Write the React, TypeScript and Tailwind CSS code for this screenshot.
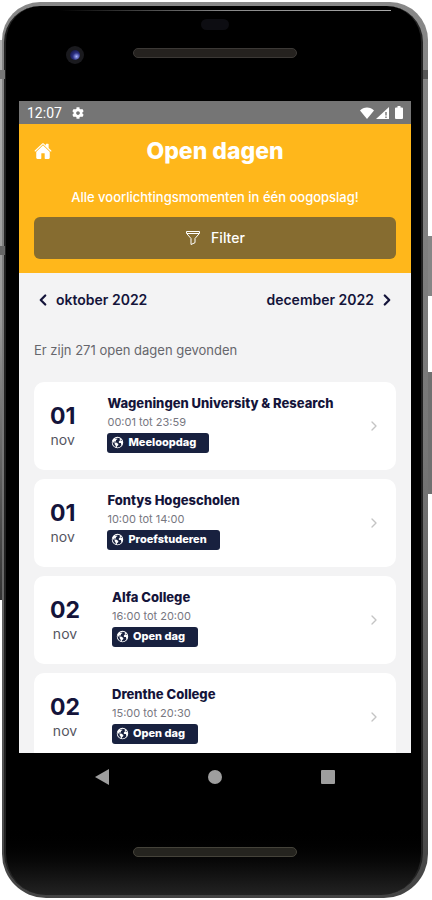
import { FaCog } from "react-icons/fa";
import { IoEarth, IoHome } from "react-icons/io5";
import { ChevronLeft, ChevronRight } from "lucide-react";

interface OpenDay {
  id: number;
  day: string;
  month: string;
  school: string;
  time: string;
  type: string;
}

const openDays: OpenDay[] = [
  {
    id: 1,
    day: "01",
    month: "nov",
    school: "Wageningen University & Research",
    time: "00:01 tot 23:59",
    type: "Meeloopdag",
  },
  {
    id: 2,
    day: "01",
    month: "nov",
    school: "Fontys Hogescholen",
    time: "10:00 tot 14:00",
    type: "Proefstuderen",
  },
  {
    id: 3,
    day: "02",
    month: "nov",
    school: "Alfa College",
    time: "16:00 tot 20:00",
    type: "Open dag",
  },
  {
    id: 4,
    day: "02",
    month: "nov",
    school: "Drenthe College",
    time: "15:00 tot 20:30",
    type: "Open dag",
  },
];

function StatusBar() {
  return (
    <div className="flex h-[23px] shrink-0 items-center justify-between bg-[#757575] px-2 text-white">
      <div className="flex items-center gap-[10px]">
        <span className="font-[Roboto,sans-serif] text-sm">12:07</span>
        <FaCog className="h-3 w-3" />
      </div>
      <div className="flex items-center gap-[2px]">
        <svg viewBox="0 0 14 12" className="h-3 w-[14px]" fill="currentColor">
          <path d="M7 12 0 3.4C1.8 1.4 4.2.4 7 .4s5.2 1 7 3L7 12Z" />
        </svg>
        <svg viewBox="0 0 13 12" className="h-3 w-[13px]" fill="currentColor">
          <path d="M13 0v12H0L13 0Z" />
          <path d="M10 5v3.500M10 9.500V11" stroke="#757575" strokeWidth="1.400" />
        </svg>
        <svg viewBox="0 0 8 13" className="ml-1 h-[13px] w-2" fill="currentColor">
          <path d="M2.500 0h3v1.500H7a1 1 0 0 1 1 1V12a1 1 0 0 1-1 1H1a1 1 0 0 1-1-1V2.500a1 1 0 0 1 1-1h1.500V0Z" />
        </svg>
      </div>
    </div>
  );
}

function Header() {
  return (
    <header className="shrink-0 bg-[#ffb71b] px-[15px] pt-[11px] pb-[14px] text-white">
      <div className="grid grid-cols-[20px_1fr_20px] items-center">
        <a href="#home" aria-label="Home">
          <IoHome className="h-[18px] w-[18px]" />
        </a>
        <h1 className="text-center text-[23px] leading-8 font-extrabold">Open dagen</h1>
      </div>
      <p className="mt-5 text-center text-[13px] leading-5 font-medium">
        Alle voorlichtingsmomenten in één oogopslag!
      </p>
      <button className="mt-[10px] flex h-[42px] w-full items-center justify-center gap-[10px] rounded-md bg-[#866c30] text-sm font-medium">
        <svg viewBox="0 0 16 16" className="h-4 w-4" fill="none" stroke="currentColor">
          <path d="M1.500 1.500h13v1.800L10 8.500v4.200l-4 1.800v-6L1.500 3.300V1.500Z" strokeLinejoin="round" />
          <path d="M2 3.500h12" />
        </svg>
        Filter
      </button>
    </header>
  );
}

function OpenDayCard({ item }: { item: OpenDay }) {
  return (
    <li>
      <a
        href={`#dag-${item.id}`}
        className="flex h-[88px] items-center rounded-[10px] bg-white pr-[14px] pl-4"
      >
        {/* Date */}
        <div className="pt-1 text-center">
          <p className="text-[23px] leading-6 font-bold">{item.day}</p>
          <p className="text-sm leading-6 text-[#55555f]">{item.month}</p>
        </div>

        {/* Info */}
        <div className="ml-8 min-w-0 flex-1 pb-[7px]">
          <h2 className="truncate text-[13px] leading-5 font-extrabold">{item.school}</h2>
          <p className="text-[11px] leading-[18px] text-[#77777f]">{item.time}</p>
          <span className="mt-[2px] flex h-5 w-fit items-center gap-1 rounded-[3px] bg-[#18213f] pr-[13px] pl-1 text-[11px] font-extrabold text-white">
            <IoEarth className="h-[13px] w-[13px]" />
            {item.type}
          </span>
        </div>

        <ChevronRight className="h-4 w-4 shrink-0 text-[#c4c4c4]" strokeWidth={2} />
      </a>
    </li>
  );
}

function NavigationBar() {
  return (
    <nav className="flex h-[47px] items-center justify-center gap-[99px] text-[#9e9e9e]">
      <button aria-label="Terug">
        <svg viewBox="0 0 14 16" className="h-4 w-[14px]" fill="currentColor">
          <path d="M14 0v16L0 8 14 0Z" />
        </svg>
      </button>
      <button aria-label="Start" className="h-[14px] w-[14px] rounded-full bg-current" />
      <button aria-label="Recent" className="h-[14px] w-[14px] rounded-[1px] bg-current" />
    </nav>
  );
}

export default function App() {
  return (
    <div className="relative h-screen bg-white pt-[2px] pr-1 pb-[2px] font-[Inter,sans-serif]">
      {/* Side strips and hardware buttons */}
      <div className="absolute top-10 left-0 h-[560px] w-6 bg-linear-to-b from-[#b4b4b4] via-[#999999] to-[#333333]" />
      <div className="absolute top-[236px] right-0 h-[60px] w-2 bg-[#858585]" />
      <div className="absolute top-[372px] right-0 h-[122px] w-2 bg-[#707070]" />

      {/* Frame */}
      <div className="relative ml-[2px] h-full rounded-t-[38px] rounded-b-[44px] bg-linear-to-b from-[#888888] via-[#777777] to-[#444444] pt-1 pr-[5px] pb-[3px] pl-[2px]">
        <div className="absolute top-[68px] right-0 h-[9px] w-[5px] bg-[#555555]" />
        <div className="absolute top-[68px] -left-[2px] h-[9px] w-[5px] bg-[#777777]" />
        <div className="absolute top-[244px] -left-[2px] h-[9px] w-[5px] bg-[#666666]" />
        <div className="flex h-full flex-col rounded-t-[36px] rounded-b-[42px] border-x-2 border-[#222222] bg-linear-to-b from-black from-92% to-[#232323] pr-[10px] pl-[13px]">
          {/* Top bezel */}
          <div className="relative h-[95px] shrink-0">
            <div className="absolute top-1 right-5 left-10 h-px bg-linear-to-r from-transparent via-[#888888] to-[#aaaaaa]" />
            <div className="absolute top-[13px] left-1/2 h-[11px] w-7 -translate-x-1/2 rounded-full bg-[#0d0d12]" />
            <div className="absolute top-[40px] left-[47px] flex h-[18px] w-[18px] items-center justify-center rounded-full bg-[#1a1a1e]">
              <span className="h-[10px] w-[10px] rounded-full bg-radial-[at_65%_65%] from-[#a7b3ff] via-[#2b2f80] via-40% to-[#090920]" />
            </div>
            <div className="absolute top-[42px] left-1/2 h-[10px] w-[164px] -translate-x-1/2 rounded-full border border-[#3c3936] bg-[#25221f]" />
          </div>

          {/* Screen */}
          <div className="flex min-h-0 flex-1 flex-col overflow-hidden bg-[#f3f3f4] text-[#14143a]">
            <StatusBar />
            <Header />
            <main className="px-[15px]">
              <div className="flex items-center justify-between pt-[15px] text-sm leading-6 font-semibold">
                <button className="flex items-center gap-1">
                  <ChevronLeft className="h-[18px] w-[18px]" strokeWidth={3} />
                  oktober 2022
                </button>
                <button className="flex items-center gap-1">
                  december 2022
                  <ChevronRight className="h-[18px] w-[18px]" strokeWidth={3} />
                </button>
              </div>
              <p className="pt-[26px] text-[13px] leading-6 text-[#66666c]">
                Er zijn 271 open dagen gevonden
              </p>
              <ul className="flex flex-col gap-[9px] pt-5">
                {openDays.map((item) => (
                  <OpenDayCard key={item.id} item={item} />
                ))}
              </ul>
            </main>
          </div>

          {/* Bottom bezel */}
          <div className="relative h-[142px] shrink-0">
            <NavigationBar />
            <div className="absolute top-[94px] left-1/2 h-[10px] w-[164px] -translate-x-1/2 rounded-full border border-[#45433a] bg-[#25241f]" />
          </div>
        </div>
      </div>
    </div>
  );
}
